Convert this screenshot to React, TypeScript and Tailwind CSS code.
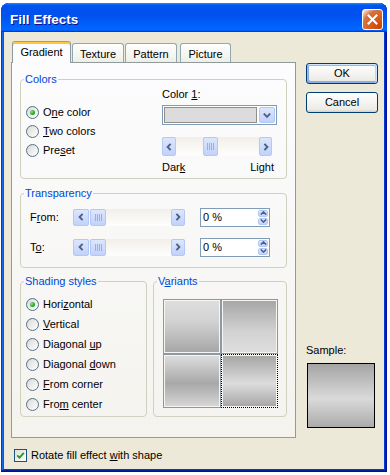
import React from 'react';

type Dir = 'left' | 'right' | 'up' | 'down';

const blueBtn =
  'flex items-center justify-center rounded-[2px] border border-[#b4c8f6] bg-[linear-gradient(180deg,#dce6fd,#c1d2fb)]';

function Chevron({ dir }: { dir: Dir }) {
  if (dir === 'left' || dir === 'right') {
    return (
      <svg width="6" height="8" viewBox="0 0 6 8">
        <path
          d={dir === 'left' ? 'M4.6 0.8 L1.6 4 L4.6 7.2' : 'M1.4 0.8 L4.4 4 L1.4 7.2'}
          fill="none"
          stroke="#4d6185"
          strokeWidth="1.9"
        />
      </svg>
    );
  }
  return (
    <svg width="7" height="4" viewBox="0 0 7 4">
      <path
        d={dir === 'up' ? 'M0.8 3.6 L3.5 0.9 L6.2 3.6' : 'M0.8 0.4 L3.5 3.1 L6.2 0.4'}
        fill="none"
        stroke="#4d6185"
        strokeWidth="1.5"
      />
    </svg>
  );
}

function Thumb({ className }: { className: string }) {
  return (
    <div className={`${blueBtn} gap-[1px] ${className}`}>
      {[0, 1, 2, 3].map((i) => (
        <span key={i} className="h-[7px] w-[1px] bg-[#8fb1f3]" />
      ))}
    </div>
  );
}

function Radio({ checked, row, children }: { checked?: boolean; row: string; children: React.ReactNode }) {
  return (
    <div className={`flex items-center gap-[4px] ${row}`}>
      <span className="flex h-[13px] w-[13px] items-center justify-center rounded-full border border-[#56708d] bg-[linear-gradient(135deg,#d9d9d3,#ffffff)]">
        {checked && (
          <span className="h-[5px] w-[5px] rounded-full bg-[radial-gradient(circle_at_35%_35%,#8ee08e,#22a322_60%,#0f850f)]" />
        )}
      </span>
      <span>{children}</span>
    </div>
  );
}

function Group({ title, className, children }: { title: React.ReactNode; className: string; children: React.ReactNode }) {
  return (
    <fieldset className={`rounded-[4px] border border-[#d0d0bf] px-[3px] ${className}`}>
      <legend className="px-[1px] leading-[13px] text-[#0046d5]">{title}</legend>
      {children}
    </fieldset>
  );
}

function TransRow({ label, className }: { label: React.ReactNode; className: string }) {
  return (
    <div className={`flex h-[20px] items-center ${className}`}>
      <span className="w-[49px] pl-[6px]">{label}</span>
      <div className="flex h-[17px] w-[112px] bg-[linear-gradient(180deg,#f1efe8,#fefefe)]">
        <div className={`${blueBtn} w-[16px]`}>
          <Chevron dir="left" />
        </div>
        <div className="flex-1 pl-[1px]">
          <Thumb className="h-full w-[16px]" />
        </div>
        <div className={`${blueBtn} w-[14px]`}>
          <Chevron dir="right" />
        </div>
      </div>
      <div className="ml-[15px] flex h-[19px] w-[70px] border border-[#7f9db9] bg-white">
        <span className="flex-1 pl-[2px] leading-[17px]">0 %</span>
        <div className="flex w-[12px] flex-col gap-[1px] p-[1px]">
          <div className={`${blueBtn} flex-1`}>
            <Chevron dir="up" />
          </div>
          <div className={`${blueBtn} flex-1`}>
            <Chevron dir="down" />
          </div>
        </div>
      </div>
    </div>
  );
}

export default function App() {
  return (
    <div className="h-[475px] w-[390px] overflow-hidden bg-white pl-[1px] pt-[3px] font-['Liberation_Sans',Arial,sans-serif] text-[11px] leading-[13px] text-black">
      <div className="flex h-[469px] w-[386px] flex-col rounded-t-[8px] bg-[#ece9d8] shadow-[inset_-1px_-1px_#00138c,inset_1px_1px_#0831d9,inset_-2px_-2px_#001ea0,inset_2px_2px_#166aee,inset_-3px_-3px_#003bda,inset_3px_3px_#0855dd]">
        {/* title bar */}
        <div className="flex h-[29px] items-center rounded-t-[8px] bg-[linear-gradient(180deg,#0997ff_0%,#0053ee_8%,#0050ee_40%,#0066ff_88%,#0066ff_93%,#005bff_95%,#003dd7_96%,#003dd7_100%)] pl-[9px] pr-[4px]">
          <span className="flex-1 pt-[3px] text-[13.5px] font-bold text-white [text-shadow:1px_1px_#0f1089]">Fill Effects</span>
          <div className="mt-[4px] flex h-[21px] w-[21px] items-center justify-center rounded-[3px] border border-white bg-[radial-gradient(circle_at_90%_90%,#cc4600_0%,#dc6527_55%,#cd7546_70%,#ffccb2_90%,#ffffff_100%)]">
            <svg width="11" height="11" viewBox="0 0 11 11">
              <path d="M1.5 1.5 L9.5 9.5 M9.5 1.5 L1.5 9.5" stroke="white" strokeWidth="2" strokeLinecap="square" />
            </svg>
          </div>
        </div>

        {/* body */}
        <div className="flex flex-1 flex-col pl-[10px] pr-[9px] pt-[9px]">
          <div className="flex gap-[10px]">
            <div className="flex w-[285px] flex-col">
              {/* tabs */}
              <div className="flex h-[21px] items-end">
                <div className="relative z-10 -mb-[1px] ml-[1px] flex h-[22px] w-[59px] justify-center rounded-t-[3px] border border-b-0 border-[#919b9c] border-t-[#e68b2c] bg-[#fcfcfe] pt-[4px] shadow-[inset_0_2px_#ffc73c]">
                  Gradient
                </div>
                <div className="ml-[1px] flex h-[19px] w-[52px] justify-center rounded-t-[3px] border border-b-0 border-[#91a7b4] bg-[linear-gradient(180deg,#ffffff,#fafaf9_26%,#f0f0ea_95%,#ecebe5)] pt-[4px]">
                  Texture
                </div>
                <div className="ml-[1px] flex h-[19px] w-[52px] justify-center rounded-t-[3px] border border-b-0 border-[#91a7b4] bg-[linear-gradient(180deg,#ffffff,#fafaf9_26%,#f0f0ea_95%,#ecebe5)] pt-[4px]">
                  Pattern
                </div>
                <div className="ml-[3px] flex h-[19px] w-[51px] justify-center rounded-t-[3px] border border-b-0 border-[#91a7b4] bg-[linear-gradient(180deg,#ffffff,#fafaf9_26%,#f0f0ea_95%,#ecebe5)] pt-[4px]">
                  Picture
                </div>
              </div>

              {/* tab page */}
              <div className="flex h-[376px] flex-col border border-[#919b9c] bg-[linear-gradient(180deg,#fcfcfe,#f4f3ee)] px-[8px] pt-[10px]">
                <Group title="Colors" className="pb-[4px]">
                  <div className="flex pt-[2px]">
                    <div className="w-[138px] pl-[2px] pt-[15px]">
                      <Radio checked row="h-[19px]">
                        O<u>n</u>e color
                      </Radio>
                      <Radio row="h-[19px]">
                        <u>T</u>wo colors
                      </Radio>
                      <Radio row="h-[19px]">
                        Pre<u>s</u>et
                      </Radio>
                    </div>
                    <div className="flex w-[116px] flex-col">
                      <span>
                        Color <u>1</u>:
                      </span>
                      <div className="mt-[4px] flex h-[20px] w-[115px] items-center gap-[2px] border border-[#7f9db9] bg-white p-[1px]">
                        <div className="h-full flex-1 border border-[#8e8e8e] bg-[#dcdcdc]" />
                        <div className={`${blueBtn} h-full w-[16px]`}>
                          <svg width="8" height="5" viewBox="0 0 8 5">
                            <path d="M0.8 0.6 L4 3.8 L7.2 0.6" fill="none" stroke="#4d6185" strokeWidth="1.9" />
                          </svg>
                        </div>
                      </div>
                      <div className="mt-[12px] flex h-[19px] w-[110px] bg-[linear-gradient(180deg,#f1efe8,#fefefe)]">
                        <div className={`${blueBtn} w-[14px]`}>
                          <Chevron dir="left" />
                        </div>
                        <div className="flex-1 pl-[27px]">
                          <Thumb className="h-full w-[15px]" />
                        </div>
                        <div className={`${blueBtn} w-[13px]`}>
                          <Chevron dir="right" />
                        </div>
                      </div>
                      <div className="mt-[5px] flex w-[112px] justify-between">
                        <span>
                          Dar<u>k</u>
                        </span>
                        <span>Light</span>
                      </div>
                    </div>
                  </div>
                </Group>

                <Group title="Transparency" className="mt-[8px] pb-[10px]">
                  <TransRow
                    className="mt-[7px]"
                    label={
                      <>
                        F<u>r</u>om:
                      </>
                    }
                  />
                  <TransRow
                    className="mt-[10px]"
                    label={
                      <>
                        T<u>o</u>:
                      </>
                    }
                  />
                </Group>

                <div className="mt-[7px] flex gap-[6px]">
                  <Group title="Shading styles" className="w-[127px] pb-[2px]">
                    <div className="pl-[2px] pt-[6px]">
                      <Radio checked row="h-[20px]">
                        Hori<u>z</u>ontal
                      </Radio>
                      <Radio row="h-[20px]">
                        <u>V</u>ertical
                      </Radio>
                      <Radio row="h-[20px]">
                        Diagonal <u>u</u>p
                      </Radio>
                      <Radio row="h-[20px]">
                        Diagonal <u>d</u>own
                      </Radio>
                      <Radio row="h-[20px]">
                        <u>F</u>rom corner
                      </Radio>
                      <Radio row="h-[20px]">
                        Fro<u>m</u> center
                      </Radio>
                    </div>
                  </Group>
                  <Group
                    title={
                      <>
                        V<u>a</u>riants
                      </>
                    }
                    className="w-[134px]"
                  >
                    <div className="ml-[6px] mt-[11px] grid h-[109px] w-[115px] grid-cols-2 grid-rows-2">
                      <div className="border border-[#8c98a4] p-[1px]">
                        <div className="h-full bg-[linear-gradient(180deg,#dedede,#d2d2d2_40%,#a7a7a7)]" />
                      </div>
                      <div className="border border-[#8c98a4] p-[1px]">
                        <div className="h-full bg-[linear-gradient(180deg,#a7a7a7,#d2d2d2_60%,#dedede)]" />
                      </div>
                      <div className="border border-[#8c98a4] p-[1px]">
                        <div className="h-full bg-[linear-gradient(180deg,#dcdcdc,#a8a8a8_55%,#d6d6d6)]" />
                      </div>
                      <div className="border border-dotted border-black p-[1px]">
                        <div className="h-full bg-[linear-gradient(180deg,#a6a6a6,#dcdcdc_55%,#a8a8a8)]" />
                      </div>
                    </div>
                  </Group>
                </div>
              </div>
            </div>

            {/* right column */}
            <div className="flex w-[72px] flex-col pb-[10px] pt-[22px]">
              <button className="h-[21px] w-[72px] rounded-[3px] border border-[#003c74] bg-[linear-gradient(180deg,#ffffff,#ecebe6_86%,#d6d0c5)] shadow-[inset_-1px_1px_#cee7ff,inset_1px_2px_#98b8ea,inset_-2px_2px_#bcd4f6,inset_1px_-1px_#89ade4,inset_2px_-2px_#89ade4]">
                OK
              </button>
              <button className="mt-[8px] h-[21px] w-[72px] rounded-[3px] border border-[#003c74] bg-[linear-gradient(180deg,#ffffff,#ecebe6_86%,#d6d0c5)]">
                Cancel
              </button>
              <span className="mt-auto">Sample:</span>
              <div className="ml-[1px] mt-[6px] h-[65px] w-[68px] border border-black bg-[linear-gradient(180deg,#a4a4a4,#dadada_55%,#ababab)]" />
            </div>
          </div>

          {/* checkbox */}
          <div className="ml-[3px] mt-[11px] flex items-center gap-[4px]">
            <span className="flex h-[13px] w-[13px] items-center justify-center border border-[#1c5180] bg-[linear-gradient(135deg,#dcdcd7,#ffffff)]">
              <svg width="9" height="9" viewBox="0 0 9 9">
                <path d="M1.2 4.3 L3.5 6.6 L7.8 1.8" fill="none" stroke="#21a121" strokeWidth="1.9" />
              </svg>
            </span>
            <span>
              Rotate fill effect <u>w</u>ith shape
            </span>
          </div>
        </div>
      </div>
    </div>
  );
}
